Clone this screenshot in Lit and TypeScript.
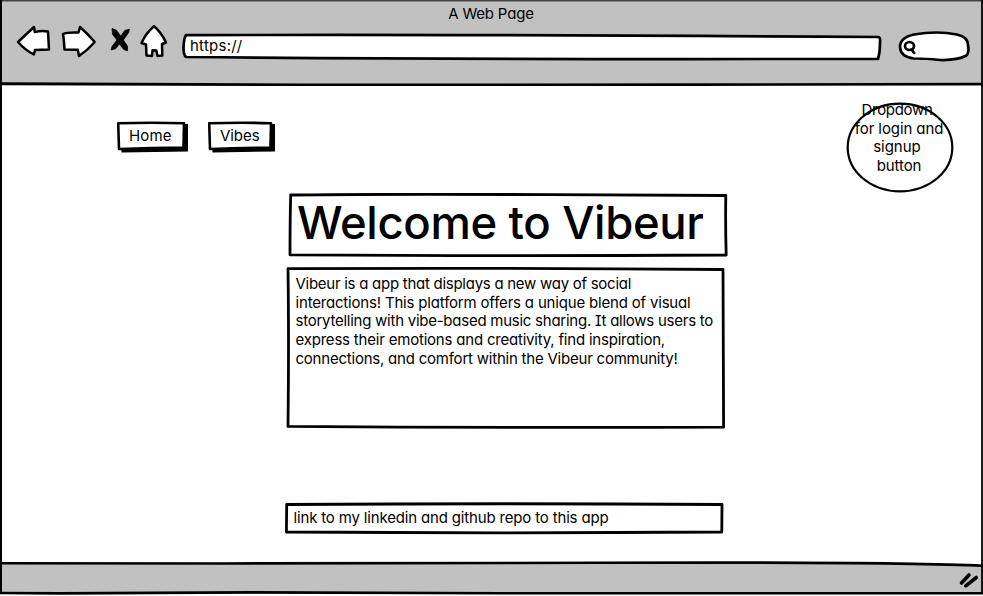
import { LitElement, html, css, svg } from "lit";
import { customElement, property } from "lit/decorators.js";

/* A single line of lettering, tracked so that it spans the given width. */
@customElement("fit-line")
class FitLine extends LitElement {
  @property({ type: Number }) span = 0;
  @property() text = "";
  static styles = css`
    :host { display: block; white-space: pre; }
    .t { display: inline-block; }
    .serif { font-feature-settings: "cv11", "cv08"; }
  `;
  render() {
    const parts = this.text.split(/\b(It)\b/);
    return html`<span class="t">${parts.map((p) => (p === "It" ? html`<span class="serif">It</span>` : p))}</span>`;
  }
  updated() {
    const el = this.renderRoot.querySelector(".t") as HTMLElement;
    el.style.letterSpacing = "0px";
    const natural = el.getBoundingClientRect().width;
    const step = (this.span + 0.5 - natural) / this.text.length;
    el.style.letterSpacing = step.toFixed(3) + "px";
  }
}

const line = (text: string, span: number) => html`<fit-line .text=${text} .span=${span}></fit-line>`;

@customElement("browser-bar")
class BrowserBar extends LitElement {
  static styles = css`
    :host { display: block; position: relative; height: 86px; background: #c1c1c1; }
    .edge { position: absolute; inset: 0; }
    .title { display: flex; justify-content: center; height: 25px; padding: 5px 1px 0 0; box-sizing: border-box; }
    .row { display: flex; align-items: flex-start; }
    .icons { flex: none; width: 181px; height: 36px; }
    .address { position: relative; width: 701px; height: 28px; margin-top: 9px; }
    .address svg { position: absolute; inset: 0; }
    .address fit-line { position: relative; padding: 3px 0 0 9px; }
    .search { margin: 5px 0 0 14px; }
    svg { display: block; overflow: visible; }
  `;
  render() {
    return html`
      <svg class="edge" width="983" height="86" fill="none" stroke="#000">
        <path d="M0 .7H983" stroke="#444" stroke-width="1.4" />
        <path d="M0 83.6L300 84.8L700 84.6L983 84" stroke-width="2.6" />
      </svg>
      <div class="title">${line("A Web Page", 85)}</div>
      <div class="row">
        <svg class="icons" viewBox="0 25 181 36" fill="#fff" stroke="#000" stroke-width="2.5" stroke-linejoin="round">
          <path d="M18 42L34 27L34.8 32Q41 30.5 48 31.5Q48.5 41 49 49.5L35 50L33.8 54.5Q25 50 18 42Z" />
          <path d="M63 34Q67 32 78.5 32.5L80 27Q88 34 94.7 42Q88 50 79 56L77.8 49.8L64.5 49.5Q64 40 63 34Z" />
          <path d="M112 28.6L116.5 30.2L120.8 36.3L124.8 30.4L129.4 29.2L128.6 32.6L123.4 40L127.4 46L127.6 50.8L123.8 49.6L119.4 44L115.5 48.8L111.2 50L112 46.4L117 40L112.6 34.5Z" fill="#000" stroke-width=".8" />
          <path d="M154 26.3Q161 32 166 42.5L162 44L162.3 55.5L157.5 56L156.3 50.5L152.5 50.3L152 56L146.5 55.5L146 44.5L141.5 43Q146 33 154 26.3Z" />
        </svg>
        <div class="address">
          <svg width="701" height="28" viewBox="181 34 701 28" fill="#fff" stroke="#000" stroke-width="2.7" stroke-linejoin="round">
            <path d="M186 35.2Q450 34.2 878.5 37Q880.5 37.5 880 42Q880 53 878 58.8Q510 59.8 186 57Q183.5 55 183.5 48Q183.8 38 186 35.2Z" />
          </svg>
          ${line("https://", 52)}
        </div>
        <svg class="search" width="75" height="32" viewBox="896 30 75 32" fill="#fff" stroke="#000" stroke-width="2.7" stroke-linejoin="round" stroke-linecap="round">
          <path d="M914 34.5Q937 30.5 957 34.5Q968 37 968 45Q969.5 53.5 966 55.8Q957 60.5 940 60Q925 58.5 914 58.5Q900.5 57 900 47Q900 37.5 914 34.5Z" />
          <ellipse cx="909.5" cy="46" rx="4.5" ry="4" />
          <path d="M911.5 49.5L914.2 53" />
        </svg>
      </div>
    `;
  }
}

@customElement("sketch-button")
class SketchButton extends LitElement {
  @property() label = "";
  @property({ type: Number }) width = 71;
  @property({ type: Number }) span = 40;
  static styles = css`
    :host { display: block; }
    .b { position: relative; height: 32px; box-sizing: border-box; padding: 6px 0 0 12px; }
    svg { position: absolute; inset: 0; }
    fit-line { position: relative; }
  `;
  render() {
    const w = this.width;
    return html`<div class="b" style="width:${w}px">
      <svg width=${w} height="32">
        ${svg`<path d="M3 3.5L${w} 3V30.5L4.5 31.5Z" /><path d="M1.2 2.3Q${w / 2} 1.2 ${w - 4} 2.3L${w - 4.5} 26.5Q${w / 2} 26.8 2 28Z" fill="#fff" stroke="#000" stroke-width="2.6" stroke-linejoin="round" />`}
      </svg>
      ${line(this.label, this.span)}
    </div>`;
  }
}

@customElement("app-root")
class AppRoot extends LitElement {
  static styles = css`
    :host {
      display: flex; flex-direction: column; position: relative; width: 983px; height: 596px; overflow: hidden;
      background: #fff; color: #000; font: 430 15px/18.7px Inter, "Liberation Sans", sans-serif;
      font-feature-settings: "cv11"; font-kerning: normal;
    }
    main { flex: none; display: grid; grid-template-columns: 285px 444px 1fr; height: 477px; }
    nav { display: flex; gap: 20px; padding: 35px 0 0 117px; }
    .center { padding-top: 107px; }
    .frame { position: relative; box-sizing: border-box; }
    .frame svg { position: absolute; inset: 0; fill: #fff; stroke: #000; stroke-width: 2.8; stroke-linejoin: round; }
    .frame fit-line { position: relative; }
    .hero { height: 66px; padding: 0 0 0 12px; margin: 0; font-size: 45.5px; line-height: 59px; font-weight: 500; }
    .about { height: 164px; padding: 9px 0 0 10.5px; margin-top: 7px; }
    .link { height: 34px; padding: 7px 0 0 8.5px; margin-top: 72px; }
    .login { width: 108px; height: 94px; margin: 15px 0 0 116px; display: flex; flex-direction: column; align-items: center; }
    .login svg { overflow: visible; }
    footer { position: relative; height: 33px; }
    footer svg { display: block; }
    .sides { position: absolute; inset: 0; pointer-events: none; }
  `;
  render() {
    return html`
      <browser-bar></browser-bar>
      <main>
        <nav>
          <sketch-button label="Home" .width=${71} .span=${42}></sketch-button>
          <sketch-button label="Vibes" .width=${67} .span=${39}></sketch-button>
        </nav>
        <div class="center">
          <div class="frame hero">
            <svg width="444" height="66" viewBox="285 193 444 66">
              <path d="M290.7 195Q400 193.8 550 194.7T725.8 195.5Q725.3 225 726.2 255Q500 256.4 290 254.8Q290 220 290.7 195Z" />
            </svg>
            ${line("Welcome to Vibeur", 406)}
          </div>
          <div class="frame about">
            <svg width="444" height="164" viewBox="285 266 444 164">
              <path d="M288 268.7Q500 267.7 723 269.5Q723 350 723.6 427.2Q500 428 288 426.4Q289 340 288 268.7Z" />
            </svg>
            ${line("Vibeur is a app that displays a new way of social", 335)}
            ${line("interactions! This platform offers a unique blend of visual", 394.5)}
            ${line("storytelling with vibe-based music sharing. It allows users to", 417)}
            ${line("express their emotions and creativity, find inspiration,", 369)}
            ${line("connections, and comfort within the Vibeur community!", 381.5)}
          </div>
          <div class="frame link">
            <svg width="444" height="34" viewBox="285 502 444 34">
              <path d="M286.7 504.5Q500 503 722 504.5L721.8 532Q500 533.6 286.4 532Z" />
            </svg>
            ${line("link to my linkedin and github repo to this app", 314.5)}
          </div>
        </div>
        <div class="frame login">
          <svg width="110" height="94" viewBox="845 101 110 94">
            <ellipse cx="900" cy="147.5" rx="52.3" ry="43.8" stroke-width="2.2" />
          </svg>
          ${line("Dropdown ", 74.5)} ${line("for login and", 88)} ${line("signup ", 51)} ${line("button", 44)}
        </div>
      </main>
      <footer>
        <svg width="983" height="33" viewBox="0 563 983 33" overflow="visible" stroke="#000">
          <path d="M0 563.2Q300 563.8 600 562.8T983 565.8V594H0Z" fill="#c1c1c1" stroke="none" />
          <path d="M0 563.2Q300 563.8 600 562.8T983 565.8" fill="none" stroke-width="2.6" />
          <path d="M0 593L60 593.4L250 592.4L500 593.3L983 593.2" fill="none" stroke-width="2.6" />
          <path d="M961.5 583L969 575M965.8 585.8L976.3 577.5" fill="none" stroke-width="3.6" stroke-linecap="round" />
        </svg>
      </footer>
      <svg class="sides" width="983" height="596" fill="none" stroke="#000">
        <path d="M1 0V594" stroke-width="2" />
        <path d="M982 0V594" stroke-width="1.8" />
      </svg>
    `;
  }
}
